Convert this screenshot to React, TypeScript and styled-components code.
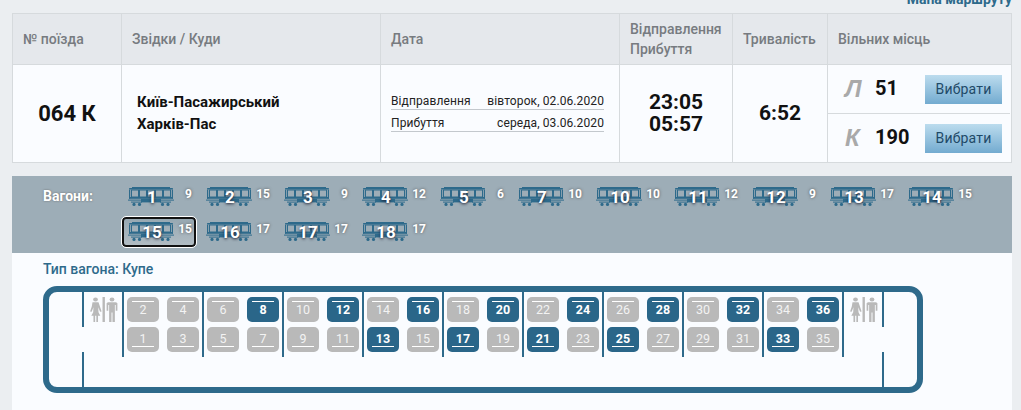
import React from 'react'
import styled, { createGlobalStyle } from 'styled-components'

const WAGONS = [
  [1, 9], [2, 15], [3, 9], [4, 12], [5, 6], [7, 10], [10, 10], [11, 12], [12, 9],
  [13, 17], [14, 15], [15, 15], [16, 17], [17, 17], [18, 17],
]
const TAKEN = [8, 12, 13, 16, 17, 20, 21, 24, 25, 28, 32, 33, 36]
const COMPARTMENTS = [0, 1, 2, 3, 4, 5, 6, 7, 8]

const GlobalStyle = createGlobalStyle`
  html, body {
    margin: 0;
    padding: 0;
    background: #ebeef1;
    height: 410px;
    overflow: hidden;
    font-family: Roboto, "Liberation Sans", sans-serif;
  }
`

const WagonIcon: React.FC = () => (
  <svg width='46' height='20' viewBox='0 0 46 20'>
    <g fill='#2e6a8b'>
      <rect x='4' y='0' width='38' height='1' />
      <rect x='1' y='1' width='44' height='1.6' rx='0.7' />
      <rect x='1' y='2.6' width='1.2' height='9' />
      <rect x='43.8' y='2.6' width='1.2' height='9' />
      <rect x='1' y='10' width='44' height='1.8' />
      <rect x='0' y='12.6' width='46' height='1' />
      <rect x='13' y='11.8' width='20' height='3.6' />
      <rect x='3' y='14.6' width='11' height='1' />
      <rect x='32' y='14.6' width='11' height='1' />
      <circle cx='6' cy='17.4' r='1.6' />
      <circle cx='11.5' cy='17.4' r='1.6' />
      <circle cx='34.5' cy='17.4' r='1.6' />
      <circle cx='40' cy='17.4' r='1.6' />
    </g>
    <g fill='none' stroke='#2e6a8b' strokeWidth='1'>
      <rect x='3.5' y='3' width='7' height='7' />
      <rect x='11.5' y='3' width='7' height='7' />
      <rect x='19.5' y='3' width='7' height='7' />
      <rect x='27.5' y='3' width='7' height='7' />
      <rect x='35.5' y='3' width='7' height='7' />
    </g>
  </svg>
)

const WcIcon: React.FC = () => (
  <svg width='29' height='26' viewBox='0 0 29 26'>
    <g fill='#b9b9b9'>
      <g transform='translate(6.5 0) scale(1.2 1) translate(-6.5 0)'>
        <circle cx='6.5' cy='2.4' r='2' />
        <path d='M4 5.2h5l1.2 4.2 1.4 5-1.3.4-1.5-4.6.2 5 1.5 3.6H8.6V25H7.2v-6.2h-1V25H4.8v-6.2H3l1.6-3.6.2-5-1.5 4.6-1.3-.4 1.4-5z' />
      </g>
      <rect x='13.5' y='0' width='2.4' height='25' />
      <g transform='translate(23 0) scale(1.2 1) translate(-23 0)'>
        <circle cx='23' cy='2.4' r='2' />
        <path d='M19.6 5.2h6.8l1.1 1v7.6h-1.4V8h-.7v17h-2V15.5h-.8V25h-2V8h-.7v5.8h-1.4V6.2z' />
      </g>
    </g>
  </svg>
)

const App: React.FC = () => (
  <Page>
    <GlobalStyle />
    <RouteLinkRow>
      <RouteLink>Мапа маршруту</RouteLink>
    </RouteLinkRow>

    <TrainTable>
      <HeaderCell>№ поїзда</HeaderCell>
      <HeaderCell>Звідки / Куди</HeaderCell>
      <HeaderCell>Дата</HeaderCell>
      <HeaderCell>
        Відправлення
        <br />
        Прибуття
      </HeaderCell>
      <HeaderCell>Тривалість</HeaderCell>
      <HeaderCell>Вільних місць</HeaderCell>

      <BodyCell center>
        <TrainNumber>064 К</TrainNumber>
      </BodyCell>
      <BodyCell>
        <Stations>
          Київ-Пасажирський
          <br />
          Харків-Пас
        </Stations>
      </BodyCell>
      <BodyCell>
        <DateList>
          <DateRow>
            <span>Відправлення</span>
            <span>вівторок, 02.06.2020</span>
          </DateRow>
          <DateRow>
            <span>Прибуття</span>
            <span>середа, 03.06.2020</span>
          </DateRow>
        </DateList>
      </BodyCell>
      <BodyCell center>
        <Times>
          23:05
          <br />
          05:57
        </Times>
      </BodyCell>
      <BodyCell center>
        <Duration>6:52</Duration>
      </BodyCell>
      <PlacesCell>
        <PlaceRow>
          <PlaceClass>Л</PlaceClass>
          <PlaceCount>51</PlaceCount>
          <SelectButton>Вибрати</SelectButton>
        </PlaceRow>
        <PlaceRow>
          <PlaceClass>К</PlaceClass>
          <PlaceCount>190</PlaceCount>
          <SelectButton>Вибрати</SelectButton>
        </PlaceRow>
      </PlacesCell>
    </TrainTable>

    <WagonPanel>
      <WagonBar>
        <WagonLabel>Вагони:</WagonLabel>
        <WagonGrid>
          {WAGONS.map(([number, free]) => (
            <WagonItem key={number} selected={number === 15}>
              <WagonPicture>
                <WagonIcon />
                <WagonNumber>{number}</WagonNumber>
              </WagonPicture>
              <WagonFree>{free}</WagonFree>
            </WagonItem>
          ))}
        </WagonGrid>
      </WagonBar>
      <CoachBlock>
        <CoachType>Тип вагона: Купе</CoachType>
        <Coach>
          <Door />
          <WcRoom>
            <WcIcon />
          </WcRoom>
          {COMPARTMENTS.map((c) => (
            <Compartment key={c}>
              {[0, 1].map((s) => {
                const top = (c * 4) + (s + 1) * 2
                const bottom = top - 1
                return (
                  <React.Fragment key={s}>
                    <Seat taken={TAKEN.includes(top)} lineAt='top' row={1}>
                      {top}
                    </Seat>
                    <Seat taken={TAKEN.includes(bottom)} lineAt='bottom' row={2}>
                      {bottom}
                    </Seat>
                  </React.Fragment>
                )
              })}
            </Compartment>
          ))}
          <WcRoom>
            <WcIcon />
          </WcRoom>
          <Door last />
        </Coach>
      </CoachBlock>
    </WagonPanel>
  </Page>
)

const Page = styled.div`
  width: 1021px;
  height: 410px;
  overflow: hidden;
  color: #111;
`

const RouteLinkRow = styled.div`
  height: 13px;
  padding-right: 9px;
  display: flex;
  justify-content: flex-end;
  align-items: flex-end;
  overflow: hidden;
`

const RouteLink = styled.a`
  font-size: 14px;
  font-weight: 700;
  line-height: 16px;
  margin-bottom: 6px;
  color: #2e6a8b;
`

const TrainTable = styled.div`
  margin: 0 9px 0 12px;
  width: 1000px;
  box-sizing: border-box;
  display: grid;
  grid-template-columns: 108px 259px 239px 113px 95px 1fr;
  grid-template-rows: 51px 97px;
  border: 1px solid #d6dadd;
`

const HeaderCell = styled.div`
  background: #e5e8ec;
  border-bottom: 1px solid #d6dadd;
  border-left: 1px solid #d6dadd;
  padding-left: 10px;
  display: flex;
  align-items: center;
  font-size: 14px;
  font-weight: 500;
  line-height: 20px;
  color: #777b80;
  &:first-child {
    border-left: none;
  }
`

const BodyCell = styled.div<{ center?: boolean }>`
  background: #fafcff;
  border-left: 1px solid #d6dadd;
  display: flex;
  align-items: center;
  justify-content: ${(props) => (props.center ? 'center' : 'flex-start')};
  &:nth-child(7) {
    border-left: none;
  }
`

const TrainNumber = styled.div`
  font-size: 22px;
  font-weight: 700;
`

const Stations = styled.div`
  padding: 0 0 2px 15px;
  font-size: 15px;
  font-weight: 700;
  line-height: 22px;
`

const DateList = styled.div`
  margin-left: 10px;
  padding-bottom: 8px;
  width: 213px;
`

const DateRow = styled.div`
  display: flex;
  justify-content: space-between;
  margin-top: 6px;
  font-size: 12px;
  letter-spacing: 0.1px;
  line-height: 15px;
  border-bottom: 1px solid #c3c8cd;
  color: #222;
`

const Times = styled.div`
  padding-bottom: 2px;
  font-size: 21px;
  font-weight: 700;
  line-height: 22px;
  text-align: center;
`

const Duration = styled.div`
  padding-bottom: 2px;
  font-size: 21px;
  font-weight: 700;
`

const PlacesCell = styled(BodyCell)`
  display: block;
`

const PlaceRow = styled.div`
  height: 48px;
  display: flex;
  align-items: center;
  margin-right: 1px;
  & + & {
    border-top: 1px solid #d6dadd;
  }
`

const PlaceClass = styled.div`
  width: 47px;
  padding-left: 17px;
  box-sizing: border-box;
  font-family: "Liberation Sans", sans-serif;
  font-size: 24px;
  font-style: italic;
  font-weight: 700;
  color: #a9a9a9;
`

const PlaceCount = styled.div`
  width: 50px;
  margin-top: -3px;
  font-size: 20px;
  font-weight: 700;
`

const SelectButton = styled.button`
  width: 77px;
  height: 29px;
  padding: 0;
  border: none;
  font-family: inherit;
  font-size: 14px;
  font-weight: 400;
  letter-spacing: 0.2px;
  color: #1f4a68;
  background: linear-gradient(#bcdcee, #73abd0);
`

const WagonPanel = styled.div`
  margin: 13px 9px 0 12px;
  background: #fafcff;
  height: 234px;
`

const WagonBar = styled.div`
  background: #9dadb7;
  height: 77px;
  box-sizing: border-box;
  padding: 6px 0 0 31px;
  display: flex;
  align-items: flex-start;
`

const WagonLabel = styled.div`
  width: 79px;
  padding-top: 6px;
  font-size: 14px;
  font-weight: 700;
  line-height: 17px;
  color: #fff;
  text-shadow: 0 0 2px #666;
`

const WagonGrid = styled.div`
  display: grid;
  grid-template-columns: repeat(11, 78px);
  grid-auto-rows: 30px;
  row-gap: 5px;
`

const WagonItem = styled.div<{ selected?: boolean }>`
  width: 74px;
  height: 30px;
  box-sizing: border-box;
  padding: 0 2px 0 4px;
  display: flex;
  align-items: center;
  border-radius: 4px;
  border: 2px solid ${(props) => (props.selected ? '#111' : 'transparent')};
  outline: ${(props) => (props.selected ? '1px solid #fff' : 'none')};
  background: ${(props) =>
    props.selected ? 'linear-gradient(#97a8b2, #b1bcc3)' : 'transparent'};
`

const WagonPicture = styled.div`
  position: relative;
  width: 46px;
  height: 20px;
  display: flex;
`

const WagonNumber = styled.div`
  position: absolute;
  inset: 0 -2px 0 0;
  text-align: center;
  font-size: 17px;
  font-weight: 700;
  line-height: 20px;
  color: #fff;
  text-shadow: 0 1px 3px #223;
`

const WagonFree = styled.div`
  flex: 1;
  margin-top: -7px;
  text-align: right;
  font-size: 12px;
  font-weight: 700;
  color: #fff;
  text-shadow: 0 0 3px #555;
`

const CoachBlock = styled.div`
  padding: 8px 0 0 31px;
`

const CoachType = styled.div`
  font-size: 14px;
  font-weight: 500;
  line-height: 16px;
  color: #2e6a8b;
`

const Coach = styled.div`
  margin-top: 9px;
  width: 880px;
  height: 107px;
  box-sizing: border-box;
  border: 6px solid #2e6a8b;
  border-radius: 14px;
  display: flex;
`

const Door = styled.div<{ last?: boolean }>`
  width: ${(props) => (props.last ? '34px' : '35px')};
  flex: none;
  height: 95px;
  box-sizing: border-box;
  background: linear-gradient(
    #2e6a8b 0 35px,
    transparent 35px 60px,
    #2e6a8b 60px
  );
  background-size: 2px 100%;
  background-repeat: no-repeat;
  background-position: ${(props) => (props.last ? 'left' : 'right')} top;
`

const WcRoom = styled.div`
  width: 38px;
  flex: none;
  box-sizing: border-box;
  padding: 5px 0 0 5px;
`

const Compartment = styled.div`
  width: 80px;
  flex: none;
  height: 65px;
  box-sizing: border-box;
  border-left: 2px solid #2e6a8b;
  padding: 5px 0 0 3px;
  display: grid;
  grid-template-columns: repeat(2, 32px);
  grid-template-rows: repeat(2, 25px);
  column-gap: 8px;
  row-gap: 5px;
  &:nth-last-child(3) {
    width: 82px;
    border-right: 2px solid #2e6a8b;
  }
`

const Seat = styled.div<{ taken?: boolean; lineAt: 'top' | 'bottom'; row: number }>`
  position: relative;
  grid-row: ${(props) => props.row};
  border-radius: 5px;
  background: ${(props) => (props.taken ? '#2a6689' : '#b9b9b9')};
  color: ${(props) => (props.taken ? '#fff' : '#f3f3f3')};
  font-size: 12.5px;
  font-weight: ${(props) => (props.taken ? 700 : 400)};
  line-height: ${(props) => (props.lineAt === 'top' ? '25px' : '24px')};
  text-align: center;
  &::after {
    content: '';
    position: absolute;
    left: 5px;
    right: 5px;
    height: 1px;
    background: #fff;
    ${(props) => (props.lineAt === 'top' ? 'top: 4px;' : 'bottom: 5px;')}
  }
`

export default App
